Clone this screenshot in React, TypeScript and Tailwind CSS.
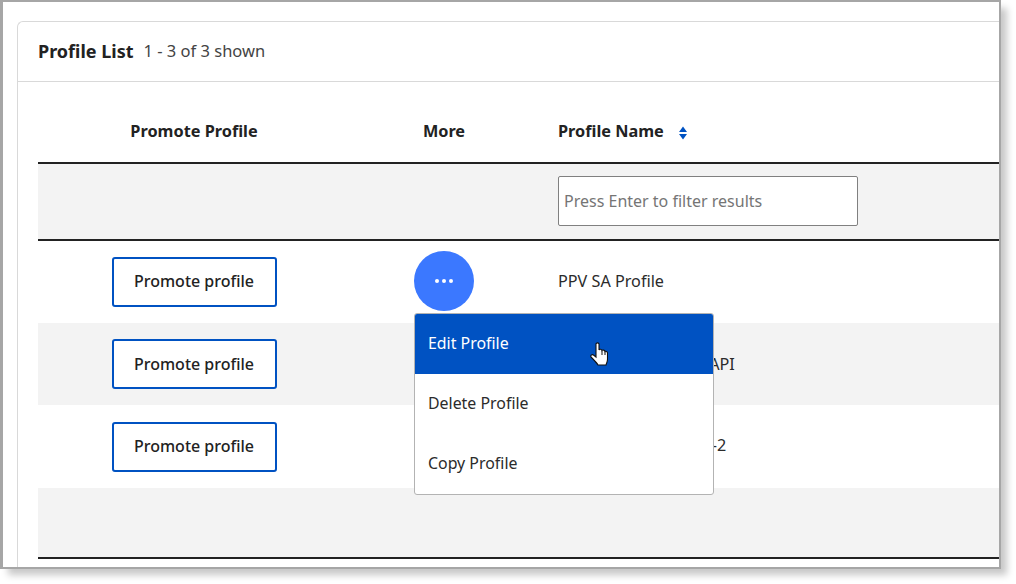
import { useState } from "react"

const font = "font-['Noto_Sans',sans-serif]"

function PromoteButton({ nudge }: { nudge: boolean }) {
  return (
    <button
      className={
        nudge
          ? "flex h-[50px] w-[165px] items-center justify-center rounded-[3px] border-2 border-[#0052c2] bg-white pb-[2px] text-[16px] font-medium text-[#222]"
          : "flex h-[50px] w-[165px] items-center justify-center rounded-[3px] border-2 border-[#0052c2] bg-white text-[16px] font-medium text-[#222]"
      }
    >
      Promote profile
    </button>
  )
}

function SortIcon() {
  return (
    <svg width="10" height="14" viewBox="0 0 10 14" className="ml-[14px] mt-[2px]">
      <path d="M5 .5 L9 6 H1 Z M1 8 H9 L5 13.5 Z" fill="#0052c2" />
    </svg>
  )
}

function HandCursor() {
  return (
    <svg width="18" height="24" viewBox="0 0 18 24" className="absolute left-[175px] top-[28px]">
      <path
        d="M6 2 C6 .5 9 .5 9 2 V8 C9.5 7 11.5 7 12 8.5 C12.5 7.7 14.5 8 15 9.5 C15.5 9 17.5 9.5 17.5 11 V17 C17.5 20 16.5 21 16 23 H8 C7 21 3 17 1 15 C0 13.5 2 12 3.5 13 L6 15 Z"
        fill="#fff"
        stroke="#111"
        strokeWidth="1.1"
      />
      <path d="M12 8.5 V13 M15 9.5 V13" stroke="#111" strokeWidth="1" fill="none" />
    </svg>
  )
}

const menuItems = ["Edit Profile", "Delete Profile", "Copy Profile"]

function MoreMenu() {
  const [active] = useState(0)
  return (
    <div className="absolute left-0 top-[62px] z-10 w-[300px] overflow-hidden rounded-[3px] border border-[#b3b3b3] bg-white text-[15.9px]">
      {menuItems.map((item, i) => (
        <div
          key={item}
          className={
            i === active
              ? "relative flex h-[60px] items-center bg-[#0052c2] pl-[13px] text-white"
              : "flex h-[60px] items-center pl-[13px] text-[#2b2b2b]"
          }
        >
          {item}
          {i === active && <HandCursor />}
        </div>
      ))}
    </div>
  )
}

const rows = [
  { name: "PPV SA Profile", bg: "bg-white", h: "h-[82px]", nudge: true },
  { name: "PPV SA Profile from API", bg: "bg-[#f3f3f3]", h: "h-[82px]", nudge: false },
  { name: "PPV SA Profile Mode-2", bg: "bg-white", h: "h-[83px]", nudge: true },
]

export default function App() {
  return (
    <div className={`${font} h-[584px] w-[1016px] overflow-hidden bg-white text-[16px] text-[#2b2b2b]`}>
      <div className="h-[569px] w-[1001px] overflow-hidden border-x-[3px] border-y-2 border-r-2 border-x-[#a6a6a6] border-y-[#a6a6a6] bg-white pl-[14px] pt-[19px] shadow-[7px_7px_7px_-1px_rgba(0,0,0,0.22)]">
        <div className="w-[1000px] rounded-tl-[6px] border-l border-t border-[#d9d9d9] pb-[20px]">
          <div className="flex h-[60px] items-center border-b border-[#d9d9d9] pl-[20px]">
            <span className="text-[18px] font-bold text-[#222]">Profile List</span>
            <span className="ml-[10px] text-[16.5px] text-[#444]">1 - 3 of 3 shown</span>
          </div>
          <div className="ml-[20px] pt-[1px]">
            <div className="grid h-[81px] grid-cols-[312px_188px_1fr] items-center border-b-2 border-[#222] pt-[18px] text-[16.3px] font-bold text-[#222]">
              <div className="text-center">Promote Profile</div>
              <div className="text-center">More</div>
              <div className="flex items-center pl-[20px]">
                Profile Name
                <SortIcon />
              </div>
            </div>
            <div className="flex h-[77px] items-center border-b-2 border-[#222] bg-[#f3f3f3] pb-[2px] pl-[520px]">
              <input
                readOnly
                placeholder="Press Enter to filter results"
                className="h-[50px] w-[300px] rounded-[2px] border border-[#808080] bg-white px-[5px] text-[16px] placeholder:text-[#757575]"
              />
            </div>
            {rows.map((row, i) => (
              <div key={row.name} className={`grid ${row.h} grid-cols-[312px_188px_1fr] items-center ${row.bg}`}>
                <div className="flex justify-center">
                  <PromoteButton nudge={row.nudge} />
                </div>
                <div className="flex justify-center">
                  {i === 0 && (
                    <div className="relative mb-[2px] h-[60px] w-[60px]">
                      <div className="flex h-[60px] w-[60px] items-center justify-center gap-[3px] rounded-full bg-[#3b78ff]">
                        <span className="h-1 w-1 rounded-full bg-white" />
                        <span className="h-1 w-1 rounded-full bg-white" />
                        <span className="h-1 w-1 rounded-full bg-white" />
                      </div>
                      <MoreMenu />
                    </div>
                  )}
                </div>
                <div className={row.nudge ? "whitespace-nowrap pb-[2px] pl-[20px] text-[16.2px]" : "whitespace-nowrap pl-[20px] text-[16.2px]"}>
                  {row.name}
                </div>
              </div>
            ))}
            <div className="h-[71px] border-b-2 border-[#222] bg-[#f3f3f3]" />
          </div>
        </div>
      </div>
    </div>
  )
}
